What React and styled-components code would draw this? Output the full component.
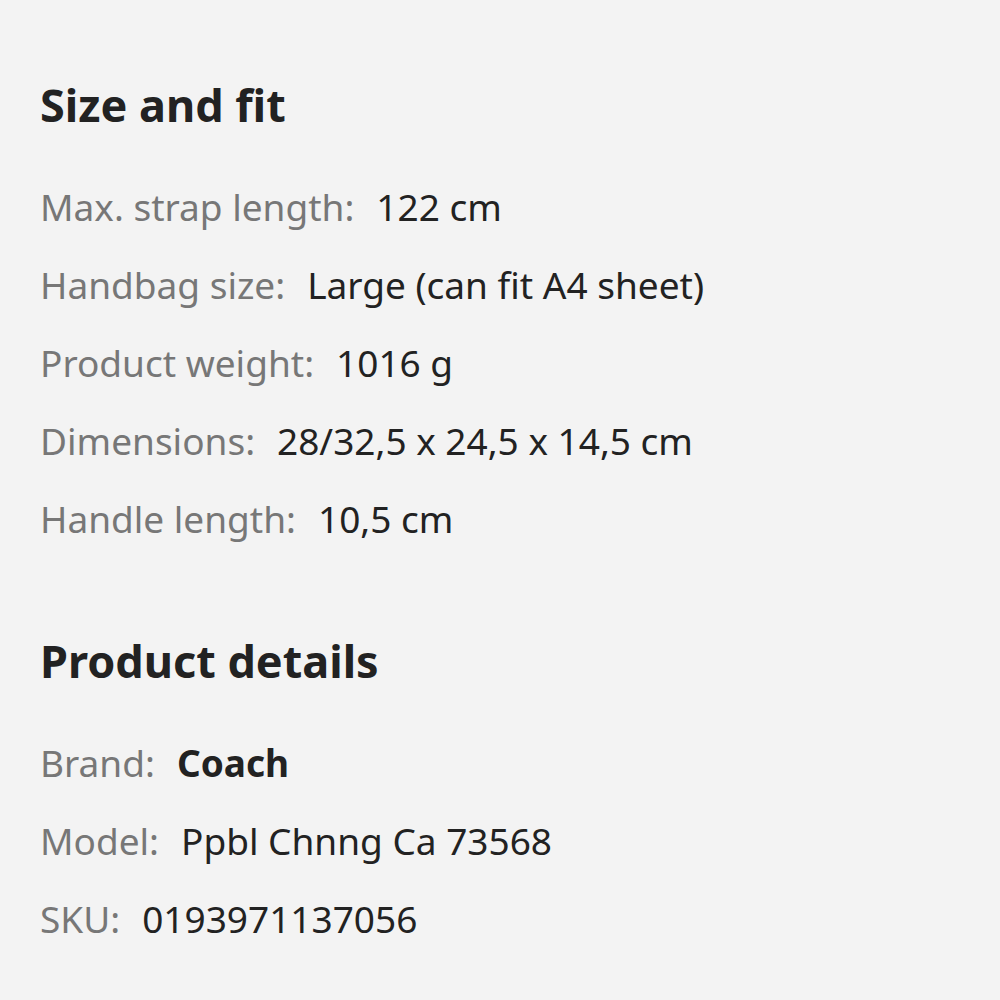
import React from 'react';
import styled, { createGlobalStyle } from 'styled-components';

const GlobalStyle = createGlobalStyle`
  body {
    margin: 0;
    background: #f3f3f3;
    font-family: "Noto Sans", Lato, sans-serif;
  }
`;

const SECTIONS = [
  {
    title: 'Size and fit',
    rows: [
      { label: 'Max. strap length:', value: '122 cm' },
      { label: 'Handbag size:', value: 'Large (can fit A4 sheet)' },
      { label: 'Product weight:', value: '1016 g' },
      { label: 'Dimensions:', value: '28/32,5 x 24,5 x 14,5 cm' },
      { label: 'Handle length:', value: '10,5 cm' },
    ],
  },
  {
    title: 'Product details',
    rows: [
      { label: 'Brand:', value: 'Coach', strong: true },
      { label: 'Model:', value: 'Ppbl Chnng Ca 73568' },
      { label: 'SKU:', value: '0193971137056' },
    ],
  },
];

const App = () => {
  return (
    <Page>
      <GlobalStyle />
      {SECTIONS.map((section) => (
        <Section key={section.title}>
          <Title>{section.title}</Title>
          <List>
            {section.rows.map((row) => (
              <Row key={row.label}>
                <Label>{row.label}</Label>
                <Value strong={row.strong}>{row.value}</Value>
              </Row>
            ))}
          </List>
        </Section>
      ))}
    </Page>
  );
};

const Page = styled.div`
  width: 1000px;
  height: 1000px;
  box-sizing: border-box;
  padding: 77px 40px 0;
  display: flex;
  flex-direction: column;
  gap: 75px;
`;

const Section = styled.section`
  display: flex;
  flex-direction: column;
  gap: 35px;
`;

const Title = styled.h2`
  margin: 0;
  font-size: 45px;
  line-height: 56px;
  font-weight: 700;
  color: #222;
`;

const List = styled.div`
  display: flex;
  flex-direction: column;
`;

const Row = styled.div`
  display: flex;
  align-items: baseline;
  gap: 22px;
  font-size: 37px;
  line-height: 78px;
`;

const Label = styled.span`
  color: #777;
`;

const Value = styled.span.withConfig({ shouldForwardProp: (p) => p !== 'strong' })`
  color: #222;
  font-weight: ${(props) => (props.strong ? 700 : 400)};
`;

export default App;
